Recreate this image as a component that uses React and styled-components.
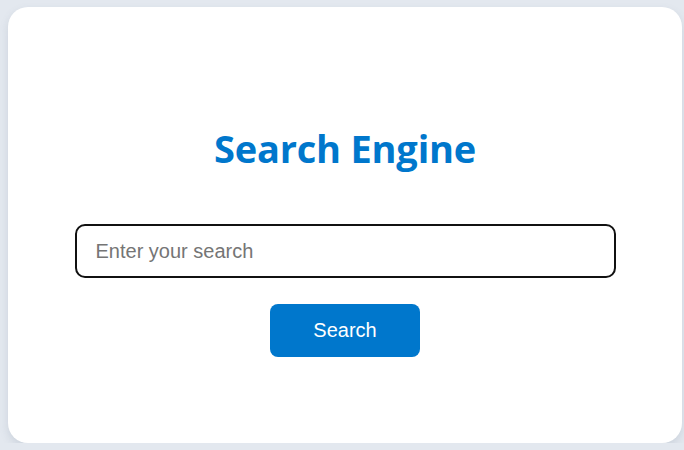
import React from "react"
import styled, { createGlobalStyle } from "styled-components"

const Global = createGlobalStyle`
  html, body {
    margin: 0;
    padding: 0;
    background: #e3e8ef;
  }
  body {
    padding: 7px 2px 0 8px;
    font-family: "Liberation Sans", Arial, sans-serif;
  }
`

const Card = styled.div`
  box-sizing: border-box;
  width: 674px;
  height: 436px;
  background: #ffffff;
  border-radius: 20px;
  box-shadow: 0 4px 8px rgba(100, 116, 139, 0.18);
  display: flex;
  flex-direction: column;
  align-items: center;
  padding-top: 115px;
`

const Title = styled.h1`
  margin: 0 0 50px;
  font-family: "Open Sans", "Noto Sans", sans-serif;
  font-size: 38px;
  font-weight: 700;
  line-height: 52px;
  color: #0077cc;
  letter-spacing: -0.2px;
`

const Input = styled.input`
  box-sizing: border-box;
  width: 541px;
  height: 54px;
  border: 2px solid #111111;
  border-radius: 10px;
  padding: 0 19px;
  font-family: "Liberation Sans", Arial, sans-serif;
  font-size: 20px;
  color: #222;
  outline: none;
  &::placeholder {
    color: #757575;
  }
`

const Button = styled.button`
  margin-top: 26px;
  width: 150px;
  height: 53px;
  border: none;
  border-radius: 8px;
  background: #0077cc;
  color: #ffffff;
  font-family: "Liberation Sans", Arial, sans-serif;
  font-size: 20px;
  cursor: pointer;
`

export default function App() {
  return (
    <>
      <Global />
      <Card>
        <Title>Search Engine</Title>
        <Input placeholder="Enter your search" />
        <Button>Search</Button>
      </Card>
    </>
  )
}
